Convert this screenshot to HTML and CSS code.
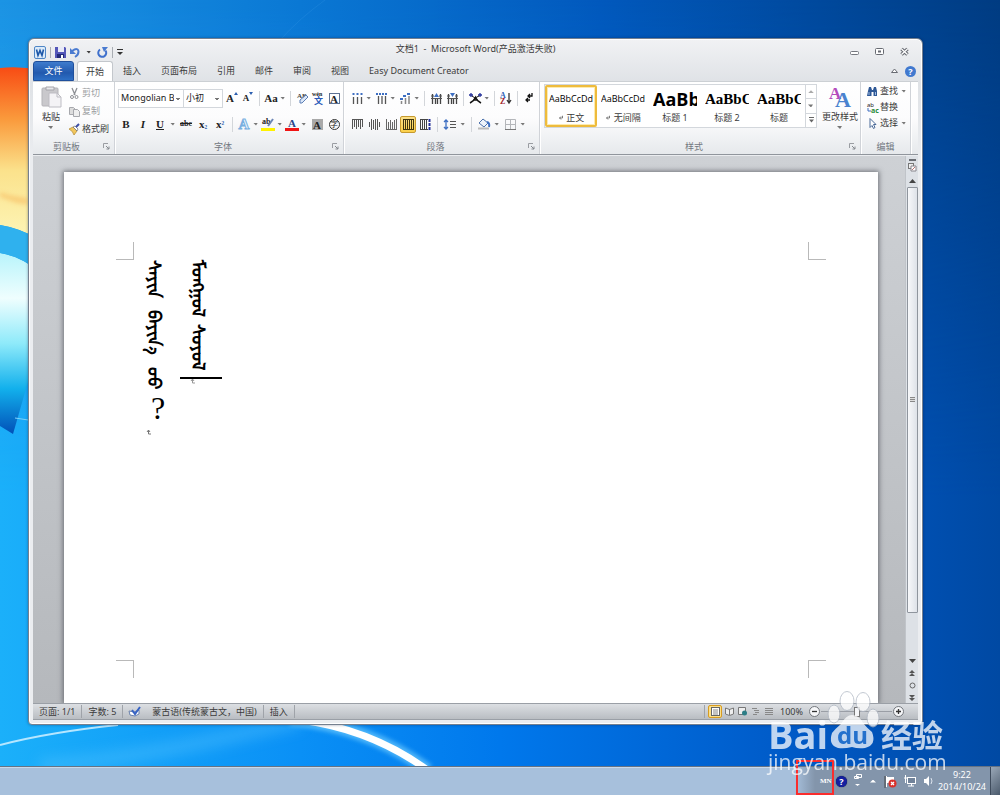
FILE: index.html
```html
<!DOCTYPE html>
<html lang="zh-CN">
<head>
  <meta charset="UTF-8" />
  <title>文档1 - Microsoft Word</title>
  <link rel="stylesheet" href="styles.css">
</head>
<body>
  <!-- shared icons -->
  <svg class="sprite" xmlns="http://www.w3.org/2000/svg">
    <symbol id="i-launch" viewBox="0 0 7 7"><path d="M.5 5V.5H5" fill="none" stroke="#9a9da2"/><path d="M3 3l3 3M6 3.500V6H3.500" fill="none" stroke="#85898f"/></symbol>
    <symbol id="i-ret" viewBox="0 0 8 8"><path d="M6 1v3H2M4 2L2 4l2 2" fill="none" stroke="#555"/></symbol>
  </svg>

  <main class="desktop">
    <svg class="wallpaper" viewBox="0 0 1000 766" preserveAspectRatio="none" aria-hidden="true">
      <defs>
        <linearGradient id="sky" x1="0" y1="0" x2="1" y2="0">
          <stop offset="0" stop-color="#1c94e4"/><stop offset=".3" stop-color="#0b78d4"/><stop offset=".6" stop-color="#0259bd"/><stop offset="1" stop-color="#003c82"/>
        </linearGradient>
        <linearGradient id="low" x1="0" y1="0" x2="1" y2="0">
          <stop offset="0" stop-color="#1bb0fa"/><stop offset=".3" stop-color="#0a90f6"/><stop offset=".5" stop-color="#0078ec"/><stop offset=".8" stop-color="#0059c6"/><stop offset="1" stop-color="#0049a3"/>
        </linearGradient>
        <linearGradient id="fade" x1="0" y1="0" x2="0" y2="1"><stop offset="0" stop-color="#000"/><stop offset=".65" stop-color="#fff"/></linearGradient>
        <mask id="down"><rect width="1000" height="766" fill="url(#fade)"/></mask>
        <linearGradient id="red" x1="0" y1="0" x2="0" y2="1">
          <stop offset="0" stop-color="#f84c14"/><stop offset=".3" stop-color="#fa9a3c"/><stop offset=".6" stop-color="#fbe28c"/><stop offset="1" stop-color="#fdf6b8"/>
        </linearGradient>
        <linearGradient id="cyan" x1="0" y1="0" x2="0" y2="1">
          <stop offset="0" stop-color="#b8f4fb"/><stop offset=".25" stop-color="#effefe"/><stop offset=".5" stop-color="#8eeafa"/><stop offset=".75" stop-color="#12b0ec"/><stop offset="1" stop-color="#0150b8"/>
        </linearGradient>
        <filter id="soft" x="-20%" y="-50%" width="140%" height="200%"><feGaussianBlur stdDeviation="2"/></filter>
        <filter id="wide" x="-20%" y="-100%" width="140%" height="300%"><feGaussianBlur stdDeviation="7"/></filter>
      </defs>
      <rect width="1000" height="766" fill="url(#sky)"/>
      <rect width="1000" height="766" fill="url(#low)" mask="url(#down)"/>
      <path d="M0 68Q20 66 40 70V240Q20 228 0 225Z" fill="url(#red)"/>
      <path d="M0 192l10 3 18 3v7l-12-2-16-6z" fill="#f6b65a" opacity=".5" filter="url(#soft)"/>
      <path d="M0 253Q20 256 40 272V340L13 434L0 426Z" fill="url(#cyan)"/>
      <path d="M0 225Q20 228 40 240V272Q20 256 0 253Z" fill="#2fb1ee"/>
      <path d="M15 418l20 3" stroke="#7dd2fa" fill="none"/>
      <path d="M40 766Q140 760 300 720" stroke="#5cc6ff" stroke-width="14" fill="none" opacity=".4" filter="url(#wide)"/>
      <path d="M0 745Q50 732 118 725" stroke="#b5e6ff" stroke-width="2" fill="none"/>
      <path d="M290 719Q370 727 428 770" stroke="#7fd6ff" stroke-width="13" fill="none" opacity=".6" filter="url(#soft)"/>
      <path d="M300 720Q370 729 426 769" stroke="#fff" stroke-width="7" fill="none"/>
      <path d="M280 40Q300 18 325 0" stroke="#3b9be8" opacity=".25" fill="none"/>
    </svg>

    <section class="window" aria-label="Microsoft Word">
      <header class="titlebar">
        <div class="quick">
          <svg width="12" height="13" viewBox="0 0 12 13"><rect x=".5" y=".5" width="11" height="12" rx="1.500" fill="#dcebf9" stroke="#4f86c6"/><path d="M2.500 3.500l1.500 6 2-5 2 5 1.500-6" fill="none" stroke="#1d57a8" stroke-width="1.600"/></svg>
          <i class="sep short"></i>
          <button aria-label="保存"><svg width="11" height="11" viewBox="0 0 11 11"><path d="M0 0h10l1 1v10H0z" fill="#5457b8"/><path d="M3 0h6v5H3z" fill="#e8eaf8"/><path d="M2 7h7v4H2z" fill="#222a78"/><path d="M6 8h2v3H6z" fill="#fff"/></svg></button>
          <button aria-label="撤消"><svg width="11" height="11" viewBox="0 0 11 11"><path d="M2 4Q8 0 8.500 4.500Q8.500 8 5 10" fill="none" stroke="#4a7bd0" stroke-width="2"/><path d="M0 1v6h6z" fill="#4a7bd0"/></svg></button>
          <i class="arrow dark"></i>
          <button aria-label="重复"><svg width="11" height="11" viewBox="0 0 11 11"><path d="M3 2.500a4 4 0 1 0 5.500 1" fill="none" stroke="#3f70cc" stroke-width="2"/><path d="M5 0h6L7 5z" fill="#4a7bd0"/></svg></button>
          <i class="sep short"></i>
          <button aria-label="自定义快速访问工具栏"><svg width="6" height="7" viewBox="0 0 6 7"><path d="M0 .5h6" stroke="#333"/><path d="M0 3h6L3 6z" fill="#333"/></svg></button>
        </div>
        <h1>文档1&nbsp; -&nbsp; Microsoft Word(产品激活失败)</h1>
        <div class="winbtns">
          <button aria-label="最小化"><svg width="9" height="9" viewBox="0 0 9 9"><rect x=".5" y="3.500" width="8" height="3" rx="1" fill="#fff" stroke="#74777e"/></svg></button>
          <button aria-label="最大化"><svg width="9" height="9" viewBox="0 0 9 9"><rect x=".5" y=".5" width="8" height="6" rx="1" fill="#fff" stroke="#686b72"/><rect x="3" y="2.500" width="3" height="2" fill="#686b72"/></svg></button>
          <button aria-label="关闭"><svg width="9" height="9" viewBox="0 0 9 9"><path d="M1.500 1l6 5.500M7.500 1l-6 5.500" stroke="#686b72" stroke-width="3.500"/><path d="M1.500 1l6 5.500M7.500 1l-6 5.500" stroke="#fff" stroke-width="1.300"/></svg></button>
        </div>
      </header>

      <nav class="tabs">
        <button class="file">文件</button>
        <button class="active">开始</button>
        <button>插入</button>
        <button>页面布局</button>
        <button>引用</button>
        <button>邮件</button>
        <button>审阅</button>
        <button>视图</button>
        <button>Easy Document Creator</button>
        <span class="tabs-right">
          <svg width="7" height="6" viewBox="0 0 7 6"><path d="M.5 4.500L3.500 1l3 3.500z" fill="#fff" stroke="#686b72"/></svg>
          <span class="help">?</span>
        </span>
      </nav>

      <div class="ribbon">
        <section class="group clipboard">
          <div class="group-body">
            <button class="big">
              <svg width="21" height="22" viewBox="0 0 21 22"><rect x="1" y="2" width="16" height="18" rx="1" fill="#c9c8cc" stroke="#b4b3b8"/><path d="M5 1h8v3H5z" fill="#e8e7ea" stroke="#a5a4aa"/><path d="M8 7h8l4 4v10H8z" fill="#f4f3f6" stroke="#bdbcc3"/><path d="M16 7v4h4" fill="none" stroke="#bdbcc3"/></svg>
              粘贴<i class="arrow"></i>
            </button>
            <div class="stack">
              <button class="off"><svg width="11" height="11" viewBox="0 0 11 11"><path d="M3 0l3 7M8 0L5 7" stroke="#8d8f94" stroke-width="1.300"/><circle cx="3" cy="9" r="1.500" fill="none" stroke="#8d8f94"/><circle cx="7.500" cy="9" r="1.500" fill="none" stroke="#8d8f94"/></svg>剪切</button>
              <button class="off"><svg width="11" height="11" viewBox="0 0 11 11"><path d="M.5 1.500h4l2 2v5h-6z" fill="#ddd" stroke="#a7a8ad"/><path d="M4.500 3.500h4l2 2v5h-6z" fill="#eee" stroke="#a7a8ad"/></svg>复制</button>
              <button><svg width="11" height="11" viewBox="0 0 11 11"><path d="M0 5l4-2 4 4-3 4Q4 7 0 5z" fill="#f2c75c" stroke="#b1862c" stroke-width=".7"/><path d="M4 3l2-1 3 3-1 2z" fill="#fff" stroke="#666" stroke-width=".7"/><path d="M7 3l3-3" stroke="#3d4fa5" stroke-width="2"/></svg>格式刷</button>
            </div>
          </div>
          <footer>剪贴板<svg class="launch"><use href="#i-launch"/></svg></footer>
        </section>

        <section class="group font">
          <div class="group-body rows">
            <div class="row">
              <select class="family" aria-label="字体"><option>Mongolian Baiti</option></select>
              <select class="size" aria-label="字号"><option>小初</option></select>
              <button class="g" aria-label="增大字体">A<svg class="tip" width="4" height="3" viewBox="0 0 4 3"><path d="M0 3h4L2 0z" fill="#2d5fb0"/></svg></button>
              <button class="g small" aria-label="缩小字体">A<svg class="tip" width="4" height="3" viewBox="0 0 4 3"><path d="M0 0h4L2 3z" fill="#2d5fb0"/></svg></button>
              <i class="sep"></i>
              <button class="g">Aa</button><i class="arrow"></i>
              <i class="sep"></i>
              <button class="g" aria-label="清除格式"><svg width="13" height="12" viewBox="0 0 13 12"><text x="1" y="6" font-size="7" fill="#444">AB</text><path d="M4 8l6-5 2 2-6 6H4z" fill="#dbe7f8" stroke="#5c7fb5"/></svg></button>
              <button class="g" aria-label="拼音指南"><svg width="13" height="13" viewBox="0 0 13 13"><text x="0" y="4" font-size="6" font-weight="bold" fill="#222">wén</text><text x="2" y="12" font-size="9" fill="#2858b8">文</text></svg></button>
              <button class="g"><span class="boxed">A</span></button>
            </div>
            <div class="row second">
              <button class="g"><b>B</b></button>
              <button class="g"><em>I</em></button>
              <button class="g"><u>U</u></button><i class="arrow"></i>
              <button class="g tiny"><s>abc</s></button>
              <button class="g">x<sub>₂</sub></button>
              <button class="g">x<sup>²</sup></button>
              <i class="sep"></i>
              <button class="g outline">A</button><i class="arrow"></i>
              <button class="g bar yellow" aria-label="突出显示"><svg width="12" height="9" viewBox="0 0 12 9"><text x="0" y="6" font-size="8" font-weight="bold" fill="#222">ab</text><path d="M6 8l5-7" stroke="#6d86b5" stroke-width="2"/></svg></button><i class="arrow"></i>
              <button class="g bar red">A</button><i class="arrow"></i>
              <button class="g"><span class="shaded">A</span></button>
              <button class="g"><span class="ring">字</span></button>
            </div>
          </div>
          <footer>字体<svg class="launch"><use href="#i-launch"/></svg></footer>
        </section>

        <section class="group para">
          <div class="group-body rows">
            <div class="row">
              <button class="g" aria-label="项目符号"><svg width="11" height="11" viewBox="0 0 11 11"><path d="M1.500 4v7M5.500 4v7M9.500 4v7" stroke="#555" stroke-width="1.300"/><path d="M.5 1h2M4.500 1h2M8.500 1h2" stroke="#3e6fc2" stroke-width="2"/></svg></button><i class="arrow"></i>
              <button class="g" aria-label="编号"><svg width="11" height="11" viewBox="0 0 11 11"><path d="M2.500 3v8M6 3v8M9.500 3v8" stroke="#555" stroke-width="1.300"/><path d="M0 1h11" stroke="#3e6fc2" stroke-width="2" stroke-dasharray="2 1"/></svg></button><i class="arrow"></i>
              <button class="g" aria-label="多级列表"><svg width="12" height="11" viewBox="0 0 12 11"><path d="M2.500 8v3M6.500 5v6M10 3v8" stroke="#888" stroke-width="1.500"/><path d="M1 6h3M4 3h3M8 1h3" stroke="#3e6fc2" stroke-width="2"/></svg></button><i class="arrow"></i>
              <i class="sep"></i>
              <button class="g" aria-label="减少缩进量"><svg width="11" height="11" viewBox="0 0 11 11"><path d="M1.500 1v10M4.500 5v6M6.500 5v6M9.500 1v10" stroke="#444" stroke-width="1.300"/><path d="M0 3h3M8 3h3M0 5.500h11" stroke="#555"/><path d="M3 4h5L5.500 0z" fill="#3e6fc2"/></svg></button>
              <button class="g" aria-label="增加缩进量"><svg width="11" height="11" viewBox="0 0 11 11"><path d="M1.500 1v10M4.500 5v6M6.500 5v6M9.500 1v10" stroke="#444" stroke-width="1.300"/><path d="M0 3h3M8 3h3M0 5.500h11" stroke="#555"/><path d="M3 0h5L5.500 4z" fill="#3e6fc2"/></svg></button>
              <i class="sep"></i>
              <button class="g" aria-label="中文版式"><svg width="13" height="11" viewBox="0 0 13 11"><path d="M1 10Q5 8 6.500 4.500Q8 8 12 10M4 7h5" fill="none" stroke="#111" stroke-width="1.600"/><path d="M0 2h4M9 2h4M2 0v4M11 0v4" stroke="#24319a" stroke-width="1.300"/><path d="M3 3l3 2 4-2" fill="none" stroke="#111"/></svg></button><i class="arrow"></i>
              <i class="sep"></i>
              <button class="g" aria-label="排序"><svg width="12" height="12" viewBox="0 0 12 12"><text x="0" y="6" font-size="8" fill="#2f62b8">A</text><text x="0" y="12" font-size="8" fill="#a3262b">Z</text><path d="M9 1v9M7 8l2 3 2-3" fill="none" stroke="#333" stroke-width="1.300"/></svg></button>
              <i class="sep"></i>
              <button class="g" aria-label="显示编辑标记"><svg width="8" height="10" viewBox="0 0 8 10"><path d="M7 0v3H3M5 1L3 3l2 2M5 7H1M3 5L1 7l2 2" fill="none" stroke="#111" stroke-width="1.300"/></svg></button>
            </div>
            <div class="row second">
              <button class="g" aria-label="顶端对齐"><svg width="11" height="11" viewBox="0 0 11 11"><path d="M.5 0v10M2.500 0v8M4.500 0v10M6.500 0v8M8.500 0v10M10.500 0v8" stroke="#555"/><path d="M0 .5h11" stroke="#555"/></svg></button>
              <button class="g" aria-label="居中"><svg width="11" height="11" viewBox="0 0 11 11"><path d="M.5 3v5M2.500 0v11M4.500 1v9M6.500 0v11M8.500 0v11M10.500 3v5" stroke="#555"/></svg></button>
              <button class="g" aria-label="底端对齐"><svg width="11" height="11" viewBox="0 0 11 11"><path d="M.5 0v10M2.500 3v8M4.500 1v10M6.500 3v8M8.500 1v10M10.500 0v10" stroke="#666"/><path d="M0 10.500h11" stroke="#666"/></svg></button>
              <button class="g on" aria-label="两端对齐"><svg width="11" height="11" viewBox="0 0 11 11"><path d="M.5 0v11M2.500 0v11M4.500 0v11M6.500 0v11M8.500 0v11M10.500 0v11" stroke="#40360f"/><path d="M0 .5h11M0 10.500h11" stroke="#40360f"/></svg></button>
              <button class="g" aria-label="分散对齐"><svg width="11" height="11" viewBox="0 0 11 11"><path d="M.5 0v11M2.500 0v11M4.500 0v11M6.500 0v11" stroke="#444"/><path d="M0 .5h8M0 10.500h8" stroke="#444"/><path d="M9.500 0v11" stroke="#24319a" stroke-width="2" stroke-dasharray="3 1"/></svg></button>
              <i class="sep"></i>
              <button class="g" aria-label="行距"><svg width="12" height="11" viewBox="0 0 12 11"><path d="M6 2.500h6M6 5.500h6M6 8.500h6" stroke="#555"/><path d="M2 1v9M0 3l2-2 2 2M0 8l2 2 2-2" fill="none" stroke="#3e6fc2" stroke-width="1.300"/></svg></button><i class="arrow"></i>
              <i class="sep"></i>
              <button class="g" aria-label="底纹"><svg width="12" height="12" viewBox="0 0 12 12"><path d="M5 1l5 4-4 4-5-4z" fill="#eef3fa" stroke="#4c71ab"/><path d="M9 4q3 1 2 5" fill="none" stroke="#3e6fc2" stroke-width="2"/><path d="M0 10.500h11" stroke="#bbb" stroke-width="2"/></svg></button><i class="arrow"></i>
              <button class="g" aria-label="边框"><svg width="11" height="11" viewBox="0 0 11 11"><path d="M.5.500h10v10H.5zM5.500 0v11M0 5.500h11" fill="none" stroke="#b4b6ba"/><path d="M0 10.500h11" stroke="#777"/></svg></button><i class="arrow"></i>
            </div>
          </div>
          <footer>段落<svg class="launch"><use href="#i-launch"/></svg></footer>
        </section>

        <section class="group styles">
          <div class="group-body">
            <div class="gallery">
              <button class="style chosen"><span class="sample">AaBbCcDd</span><span><svg width="6" height="6"><use href="#i-ret"/></svg> 正文</span></button>
              <button class="style"><span class="sample">AaBbCcDd</span><span><svg width="6" height="6"><use href="#i-ret"/></svg> 无间隔</span></button>
              <button class="style"><span class="sample h1">AaBb</span><span>标题 1</span></button>
              <button class="style"><span class="sample h2">AaBbC</span><span>标题 2</span></button>
              <button class="style"><span class="sample h2">AaBbC</span><span>标题</span></button>
              <div class="spin">
                <button aria-label="上一行"><i class="arrow up"></i></button>
                <button aria-label="下一行"><i class="arrow"></i></button>
                <button aria-label="其他"><svg width="5" height="6" viewBox="0 0 5 6"><path d="M0 .5h5" stroke="#666"/><path d="M0 2.500h5L2.500 5.500z" fill="#666"/></svg></button>
              </div>
            </div>
            <button class="big">
              <svg width="22" height="22" viewBox="0 0 22 22"><text x="0" y="13" font-size="17" fill="#b44bbd">A</text><text x="6" y="21" font-size="22" fill="#4a83cf">A</text></svg>
              更改样式<i class="arrow"></i>
            </button>
          </div>
          <footer>样式<svg class="launch"><use href="#i-launch"/></svg></footer>
        </section>

        <section class="group edit">
          <div class="group-body">
            <div class="stack tight">
              <button><svg width="11" height="11" viewBox="0 0 11 11"><path d="M1 5l1-4h2l1 3h1l1-3h2l1 4v5H6.500V6h-2v4H0z" fill="#2e5896"/><path d="M2 6v3M8.500 6v3" stroke="#9cb8e0"/></svg>查找<i class="arrow"></i></button>
              <button><svg width="11" height="11" viewBox="0 0 11 11"><text x="0" y="5" font-size="6" fill="#222">ab</text><text x="4" y="11" font-size="7" font-weight="bold" fill="#2a8b3a">ac</text><path d="M1 6v3h3" fill="none" stroke="#3e6fc2"/></svg>替换</button>
              <button><svg width="11" height="11" viewBox="0 0 11 11"><path d="M3 .5v9l2-2 1.500 3 1.500-1-1.500-3H9z" fill="#fff" stroke="#4b6a98"/></svg>选择<i class="arrow"></i></button>
            </div>
          </div>
          <footer>编辑</footer>
        </section>
      </div>

      <div class="workspace">
        <article class="page">
          <div class="textarea">
            <i class="crop tl"></i><i class="crop tr"></i><i class="crop bl"></i><i class="crop br"></i>
            <div class="mongol" lang="mn-Mong">
              <p class="loose"><span>ᠰᠠᠶᠢᠨ</span> <span>ᠪᠠᠶᠢᠨ᠎ᠠ</span> <span>ᠤᠤ<span class="ask">?</span></span><svg class="mark" width="6" height="6" viewBox="0 0 6 6"><path d="M1 3l1.500-2L4 3M2.500 1v4H5" fill="none" stroke="#777"/></svg></p>
              <p><span>ᠮᠣᠩᠭᠣᠯ</span> <span>ᠰᠣᠶᠣᠯ</span><span class="caret"></span><svg class="mark" width="6" height="6" viewBox="0 0 6 6"><path d="M1 3l1.500-2L4 3M2.500 1v4H5" fill="none" stroke="#999"/></svg></p>
            </div>
          </div>
        </article>
        <aside class="scroll">
          <i class="split"></i>
          <button aria-label="标尺"><svg width="9" height="9" viewBox="0 0 9 9"><rect x=".5" y=".5" width="5" height="5" fill="#eee" stroke="#777"/><path d="M3 3h5v5H3z" fill="#fff" stroke="#88858c"/><path d="M4 7l3-3" stroke="#b77"/></svg></button>
          <button aria-label="向上滚动"><svg width="7" height="4" viewBox="0 0 7 4"><path d="M0 4h7L3.500 0z" fill="#444"/></svg></button>
          <div class="track"><div class="thumb"><i></i></div></div>
          <button aria-label="向下滚动"><svg width="7" height="4" viewBox="0 0 7 4"><path d="M0 0h7L3.500 4z" fill="#444"/></svg></button>
          <button aria-label="前一页"><svg width="6" height="7" viewBox="0 0 6 7"><path d="M0 3h6L3 0zM0 6h6L3 3z" fill="#555"/></svg></button>
          <button aria-label="选择浏览对象"><svg width="7" height="7" viewBox="0 0 7 7"><circle cx="3.500" cy="3.500" r="2.500" fill="none" stroke="#666"/></svg></button>
          <button aria-label="下一页"><svg width="6" height="7" viewBox="0 0 6 7"><path d="M0 1h6L3 4zM0 4h6L3 7z" fill="#555"/></svg></button>
        </aside>
      </div>

      <footer class="status">
        <span>页面: 1/1</span>
        <span>字数: 5</span>
        <span class="lang"><svg width="12" height="11" viewBox="0 0 12 11"><path d="M0 5l5 1 5-2v4L6 10 1 9z" fill="#fff" stroke="#6a82ad"/><path d="M3 4l3 4 5-7" fill="none" stroke="#3763c4" stroke-width="2"/></svg>蒙古语(传统蒙古文，中国)</span>
        <span>插入</span>
        <div class="views">
          <button class="on" aria-label="页面视图"><svg width="9" height="9" viewBox="0 0 9 9"><rect x=".5" y=".5" width="8" height="8" fill="#fff" stroke="#666"/><path d="M2 3h5M2 5h5M2 7h5" stroke="#888"/></svg></button>
          <button aria-label="阅读版式"><svg width="9" height="9" viewBox="0 0 9 9"><path d="M.5 1l4 1.500 4-1.500v6l-4 1.500-4-1.500zM4.500 2v6" fill="#eee" stroke="#777"/></svg></button>
          <button aria-label="Web 版式"><svg width="9" height="9" viewBox="0 0 9 9"><path d="M.5.500h7v7h-7z" fill="#eee" stroke="#777"/><circle cx="6.500" cy="6" r="2.500" fill="#2c7d86"/></svg></button>
          <button aria-label="大纲"><svg width="9" height="9" viewBox="0 0 9 9"><path d="M1 1.500h5M3 3.500h5M4 5.500h4M2 7.500h4" stroke="#888"/></svg></button>
          <button aria-label="草稿"><svg width="9" height="9" viewBox="0 0 9 9"><path d="M1 1.500h8M1 3.500h8M1 5.500h8M1 7.500h8" stroke="#888"/></svg></button>
          <label for="zoom">100%</label>
          <button class="round" aria-label="缩小"><svg width="7" height="7" viewBox="0 0 7 7"><path d="M1 3.500h5" stroke="#333" stroke-width="1.300"/></svg></button>
          <input type="range" id="zoom" min="0" max="100" value="50">
          <button class="round" aria-label="放大"><svg width="7" height="7" viewBox="0 0 7 7"><path d="M1 3.500h5M3.500 1v5" stroke="#333" stroke-width="1.300"/></svg></button>
        </div>
      </footer>
    </section>
  </main>

  <footer class="taskbar">
    <div class="tray">
      <span class="ime">MN</span>
      <span class="help deep">?</span>
      <svg width="8" height="14" viewBox="0 0 8 14"><path d="M2.500.500h5v3h-5zM.5 2.500h4v2h-4z" fill="none" stroke="#fff"/><path d="M1 10h5L3.500 12z" fill="#fff"/></svg>
      <i class="arrow up white"></i>
      <svg width="13" height="13" viewBox="0 0 13 13"><path d="M2.500 1v11" stroke="#fff"/><path d="M3 2h7v6H3z" fill="#fff"/><path d="M1 1v12" stroke="#444"/><circle cx="8.500" cy="8.500" r="4" fill="#d9312b"/><path d="M7 7l3 3M10 7l-3 3" stroke="#fff" stroke-width="1.300"/></svg>
      <svg width="12" height="12" viewBox="0 0 12 12"><rect x="3.500" y="2.500" width="8" height="6" fill="#71839a" stroke="#fff"/><path d="M4 11h6M7.500 9v2M1.500 0v8M0 3h3" stroke="#fff"/></svg>
      <svg width="11" height="12" viewBox="0 0 11 12"><path d="M1 4h2l3-3v10L3 8H1z" fill="#fff"/><path d="M8 3q2 3 0 6" fill="none" stroke="#dce4ee"/></svg>
      <div class="clock"><span>9:22</span><span>2014/10/24</span></div>
      <button class="peek" aria-label="显示桌面"></button>
    </div>
  </footer>

  <div class="highlight"></div>

  <div class="watermark">
    <div class="brand">
      <span>Bai</span>
      <svg width="47" height="58" viewBox="0 0 47 58">
        <g fill="#fff" stroke="#aeb6c2"><ellipse cx="6" cy="23" rx="6" ry="9"/><ellipse cx="19" cy="10" rx="7" ry="9.500"/><ellipse cx="35" cy="11" rx="7" ry="9.500"/><ellipse cx="45" cy="27" rx="6" ry="9"/></g>
        <path d="M24 24Q31 24 35 32Q39 37 44 41Q49 54 37 57Q30 58 24 56Q16 58 10 57Q0 54 4 42Q7 38 13 33Q18 24 24 24Z" fill="#fff"/>
        <text x="9" y="53" font-size="24" fill="#2f7ad2">du</text>
      </svg>
      <span class="cn">经验</span>
    </div>
    <div class="url">jingyan.baidu.com</div>
  </div>
</body>
</html>
```

FILE: styles.css
```css
* {
  box-sizing: border-box;
}

body {
  margin: 0;
  height: 100vh;
  display: flex;
  flex-direction: column;
  overflow: hidden;
  position: relative;
  font: 9px/12px "Noto Sans", "Noto Sans CJK SC", sans-serif;
  color: #3b3b3b;
}

button, select, input {
  font: inherit;
  color: inherit;
  margin: 0;
  padding: 0;
  border: 0;
  background: none;
}

button {
  display: flex;
  align-items: center;
  justify-content: center;
  white-space: nowrap;
}

svg {
  flex: none;
  overflow: visible;
}

.sprite {
  position: absolute;
  width: 0;
  height: 0;
}

/* desktop */
.desktop {
  flex: 1;
  min-height: 0;
  display: flex;
  position: relative;
  padding: 38px 77px 41px 28px;
}

.wallpaper {
  position: absolute;
  inset: 0;
  width: 100%;
  height: 100%;
  overflow: hidden;
}

.window {
  flex: 1;
  min-width: 0;
  display: flex;
  flex-direction: column;
  position: relative;
  padding: 0 4px 4px;
  background: linear-gradient(#f1f2f4, #dfe2e6 44px, #ebedf0 120px, #ebedf0);
  border: 1px solid #75808f;
  border-radius: 6px 6px 4px 4px;
  box-shadow: inset 0 0 0 1px #fff, 0 0 3px rgba(0,20,60,0.4);
}

/* small shared parts */
.arrow {
  flex: none;
  width: 8px;
  height: 3px;
  background: #777;
  clip-path: polygon(1px 0, 6px 0, 4px 3px);
}

.arrow.up {
  background: #aaa;
  clip-path: polygon(4px 0, 7px 3px, 1px 3px);
}

.arrow.dark {
  background: #3c3c3c;
}

.arrow.white {
  background: #fff;
}

.sep {
  flex: none;
  width: 1px;
  height: 15px;
  margin: 0 3px;
  background: #d3d6da;
}

.sep.short {
  height: 11px;
  margin: 0;
  background: #a9adb3;
}

/* title bar */
.titlebar {
  height: 22px;
  display: flex;
  align-items: center;
  position: relative;
}

.quick {
  display: flex;
  align-items: center;
  gap: 4px;
  padding: 4px 0 0 1px;
}

.titlebar h1 {
  position: absolute;
  inset: 4px 0 auto;
  margin: 0;
  text-align: center;
  font-size: 9px;
  font-weight: 400;
  pointer-events: none;
}

.winbtns {
  display: flex;
  gap: 16px;
  margin-left: auto;
  padding: 4px 9px 0 0;
}

/* tabs */
.tabs {
  display: flex;
  height: 20px;
}

.tabs button {
  padding: 0 10px;
}

.tabs .file {
  width: 41px;
  margin-right: 3px;
  color: #fff;
  background: linear-gradient(#3f7ccd, #2259ae 60%, #2d6fc5);
  border: 1px solid #1f4f9c;
  border-radius: 3px 3px 0 0;
}

.tabs .active {
  width: 36px;
  padding: 0;
  background: #fff;
  border: 1px solid #c3c7cc;
  border-bottom: 0;
  border-radius: 3px 3px 0 0;
}

.tabs-right {
  display: flex;
  align-items: center;
  gap: 7px;
  margin-left: auto;
  padding-right: 2px;
}

.help {
  flex: none;
  width: 11px;
  height: 11px;
  border-radius: 50%;
  background: #4179cf;
  color: #fff;
  font-size: 9px;
  font-weight: 700;
  line-height: 11px;
  text-align: center;
}

.help.deep {
  background: #1420a0;
  box-shadow: 0 0 1px #001;
}

/* ribbon */
.ribbon {
  display: flex;
  height: 74px;
  background: linear-gradient(#fff, #fcfcfd 50%, #e6e9ec);
  border-top: 1px solid #ccd0d4;
  border-bottom: 1px solid #90959c;
}

.group {
  display: flex;
  flex-direction: column;
  border-right: 1px solid #d0d3d8;
  box-shadow: 1px 0 #fff;
}

.clipboard {
  width: 82px;
}

.font {
  width: 229px;
}

.para {
  width: 196px;
}

.styles {
  flex: 1;
  min-width: 0;
}

.edit {
  width: 50px;
  margin-right: 7px;
}

.group-body {
  flex: 1;
  display: flex;
}

.group footer {
  height: 13px;
  position: relative;
  text-align: center;
  color: #72777f;
}

.font footer, .para footer, .styles footer {
  padding-right: 12px;
}

.clipboard footer {
  padding-right: 14px;
}

.launch {
  position: absolute;
  right: 4px;
  top: 2px;
  width: 7px;
  height: 7px;
}

.big {
  flex-direction: column;
  justify-content: flex-start;
  gap: 3px;
  width: 36px;
  padding-top: 4px;
}

.stack {
  display: flex;
  flex-direction: column;
  padding-top: 2px;
}

.stack button {
  height: 18px;
  gap: 2px;
  justify-content: flex-start;
}

.stack.tight {
  padding: 1px 0 0 6px;
}

.stack.tight button {
  height: 16px;
}

.off {
  color: #9b9da1;
}

.rows {
  flex-direction: column;
  padding: 4px 0 0 3px;
  gap: 2px;
}

.row {
  display: flex;
  align-items: center;
  height: 24px;
}

.second {
  gap: 1px;
}

select {
  appearance: none;
  height: 19px;
  padding: 0 9px 0 2px;
  border: 1px solid #d3d7dc;
  border-radius: 0;
  color: #222;
  background: linear-gradient(#777, #777) right 3px top 8px / 4px 1px no-repeat, linear-gradient(#777, #777) right 4px top 9px / 2px 1px no-repeat, #fff;
}

.family {
  width: 66px;
}

.size {
  width: 40px;
  margin: 0 1px 0 -1px;
}

.g {
  flex: none;
  position: relative;
  width: 16px;
  height: 17px;
  color: #222;
  font-family: "Liberation Serif", "Noto Sans CJK SC", serif;
  font-size: 11px;
  font-weight: 700;
}

.g.small {
  font-size: 9px;
}

.g.tiny {
  font-size: 8px;
}

.g.on {
  background: linear-gradient(#fbe08a, #fbd04a);
  border: 1px solid #c69a2e;
  border-radius: 2px;
}

.g sub, .g sup {
  font-size: 9px;
  line-height: 8px;
  color: #2d5fb0;
}

.tip {
  align-self: flex-start;
  margin-top: 2px;
}

.outline {
  width: 14px;
  color: #eaf4fd;
  font-size: 15px;
  -webkit-text-stroke: 1px #79afe0;
}

.bar {
  border-bottom: 3px solid #fff200;
  height: 14px;
  width: 14px;
}

.bar.red {
  border-color: #f01414;
  color: #28458a;
}

.boxed, .shaded, .ring {
  width: 11px;
  height: 11px;
  line-height: 10px;
  border: 1px solid #5d7193;
}

.shaded {
  background: #a9a9a9;
  border-color: #a9a9a9;
}

.ring {
  border-color: #333;
  border-radius: 50%;
  font-size: 8px;
  font-weight: 400;
}

.para .rows {
  padding-left: 5px;
}

/* style gallery */
.styles .group-body {
  padding-left: 4px;
}

.styles .big {
  width: 40px;
}

.styles .big text {
  font-family: "Liberation Serif", serif;
  font-weight: 700;
}

.gallery {
  display: flex;
  flex: 1;
  height: 44px;
  margin: 2px 3px 0 0;
  border: 1px solid #d3d7dc;
  background: #fff;
}

.style {
  width: 52px;
  flex: none;
  flex-direction: column;
  justify-content: space-between;
  padding: 4px 4px 3px;
}

.chosen {
  border: 2px solid #eebb3c;
  border-radius: 2px;
  padding: 2px 2px 1px;
  box-shadow: inset 0 0 0 1px #fdebb0;
}

.sample {
  height: 20px;
  width: 44px;
  line-height: 20px;
  overflow: hidden;
  color: #000;
  font-family: "Open Sans", sans-serif;
  text-align: left;
}

.sample.h1 {
  font-size: 18px;
  font-weight: 700;
}

.sample.h2 {
  font-family: "Liberation Serif", serif;
  font-size: 15px;
  font-weight: 700;
}

.spin {
  flex: 1;
  display: flex;
  flex-direction: column;
  border-left: 1px solid #d3d7dc;
}

.spin button {
  flex: 1;
}

.spin button + button {
  border-top: 1px solid #d3d7dc;
}

/* document */
.workspace {
  flex: 1;
  min-height: 0;
  display: flex;
  margin-top: 1px;
  background: linear-gradient(#ced1d5, #b5b8bc);
}

.page {
  flex: 1;
  display: flex;
  margin: 16px 27px 0 31px;
  padding: 88px 70px 43px;
  background: #fff;
  box-shadow: 0 0 5px 1px rgba(70,72,80,0.7);
  clip-path: inset(-8px -8px 0);
}

.textarea {
  flex: 1;
  position: relative;
}

.crop {
  position: absolute;
  width: 18px;
  height: 18px;
  border: 0 solid #b9b9b9;
}

.tl {
  right: 100%;
  bottom: 100%;
  border-width: 0 1px 1px 0;
}

.tr {
  left: 100%;
  bottom: 100%;
  border-width: 0 0 1px 1px;
}

.bl {
  right: 100%;
  top: 100%;
  border-width: 1px 1px 0 0;
}

.br {
  left: 100%;
  top: 100%;
  border-width: 1px 0 0 1px;
}

.mongol {
  writing-mode: vertical-lr;
  padding-left: 2px;
  font-family: "Mongolian Baiti", "Noto Sans Mongolian", "Liberation Serif", serif;
  font-size: 18px;
  font-weight: 700;
  line-height: 44px;
  color: #000;
}

.mongol p {
  display: flex;
  gap: 7px;
  margin: 0;
  white-space: nowrap;
}

.mongol .loose {
  gap: 12px;
}

.ask {
  font-family: "Liberation Serif", serif;
  font-size: 32px;
  font-weight: 400;
  text-orientation: upright;
}

.caret {
  width: 42px;
  height: 2px;
  background: #000;
}

.mark {
  margin: -8px 0 0 10px;
}

/* scroll bar */
.scroll {
  width: 13px;
  display: flex;
  flex-direction: column;
  align-items: center;
  background: #dde1e6;
  border-left: 1px solid #c0c4c9;
}

.split {
  width: 7px;
  height: 2px;
  margin-top: 3px;
  background: #6b6e74;
}

.scroll button {
  width: 12px;
  height: 13px;
}

.scroll .track ~ button {
  height: 12px;
}

.track {
  flex: 1;
  width: 11px;
  display: flex;
}

.thumb {
  flex: 1;
  height: 91%;
  display: flex;
  align-items: center;
  justify-content: center;
  background: linear-gradient(90deg, #f7f8fa, #dee2e8);
  border: 1px solid #8f959d;
  border-radius: 1px;
}

.thumb i {
  width: 5px;
  height: 5px;
  background: repeating-linear-gradient(#888 0 1px, #ddd 1px 2px);
}

/* status bar */
.status {
  display: flex;
  align-items: center;
  height: 17px;
  border: 1px solid #9a9fa6;
  border-width: 1px 0;
  background: linear-gradient(#dcdfe3, #b9bdc2);
}

.status > span {
  display: flex;
  align-items: center;
  gap: 11px;
  height: 13px;
  padding: 0 6px;
  border-right: 1px solid #9fa3a9;
}

.views {
  display: flex;
  align-items: center;
  gap: 1px;
  margin-left: auto;
  padding: 0 14px 0 3px;
  border-left: 1px solid #9fa3a9;
}

.views button {
  width: 12px;
  height: 13px;
}

.views .on {
  width: 14px;
  background: #fbe08a;
  border: 1px solid #d79c22;
  border-radius: 2px;
}

.views label {
  margin: 0 5px 0 5px;
}

.views .round {
  width: 11px;
  height: 11px;
  border: 1px solid #73777d;
  border-radius: 50%;
  background: #f5f6f8;
}

#zoom {
  appearance: none;
  width: 71px;
  height: 12px;
  background: linear-gradient(#9a9ea5, #9a9ea5) center / 100% 1px no-repeat;
}

#zoom::-webkit-slider-thumb {
  appearance: none;
  width: 6px;
  height: 10px;
  border: 1px solid #777;
  background: #f5f6f8;
}

/* task bar */
.taskbar {
  height: 29px;
  display: flex;
  justify-content: flex-end;
  background: #a7c0dc;
  border-top: 1px solid #667384;
  box-shadow: inset 0 1px #c9d9ea;
}

.tray {
  display: flex;
  align-items: center;
  gap: 7px;
  width: 205px;
  padding-left: 25px;
  background: linear-gradient(90deg, #a7c0dc, #8395ab 20px);
  color: #fff;
}

.ime {
  width: 11px;
  margin-right: -2px;
  font-family: "Liberation Serif", serif;
  font-size: 7px;
  font-weight: 700;
}

.clock {
  display: flex;
  flex-direction: column;
  align-items: center;
  flex: 1;
  margin-left: -5px;
}

.peek {
  width: 10px;
  height: 100%;
  margin-left: -5px;
  border-left: 1px solid #3e4b5c;
  background: linear-gradient(135deg, #9aa8b8, #4b5a6c);
}

/* marks laid over the screen */
.highlight {
  position: absolute;
  right: 166px;
  bottom: 0;
  width: 38px;
  height: 35px;
  border: 2px solid #fa2d2d;
}

.watermark {
  position: absolute;
  right: 54px;
  bottom: 20px;
  width: 178px;
  color: #fff;
  opacity: 0.75;
}

.brand {
  display: flex;
  align-items: flex-end;
  font: 700 38px/30px "Open Sans", sans-serif;
}

.brand .cn {
  margin-left: 6px;
  font: 700 31px/30px "Noto Sans CJK SC", sans-serif;
}

.url {
  font: 21px/26px "Open Sans", sans-serif;
}
```
